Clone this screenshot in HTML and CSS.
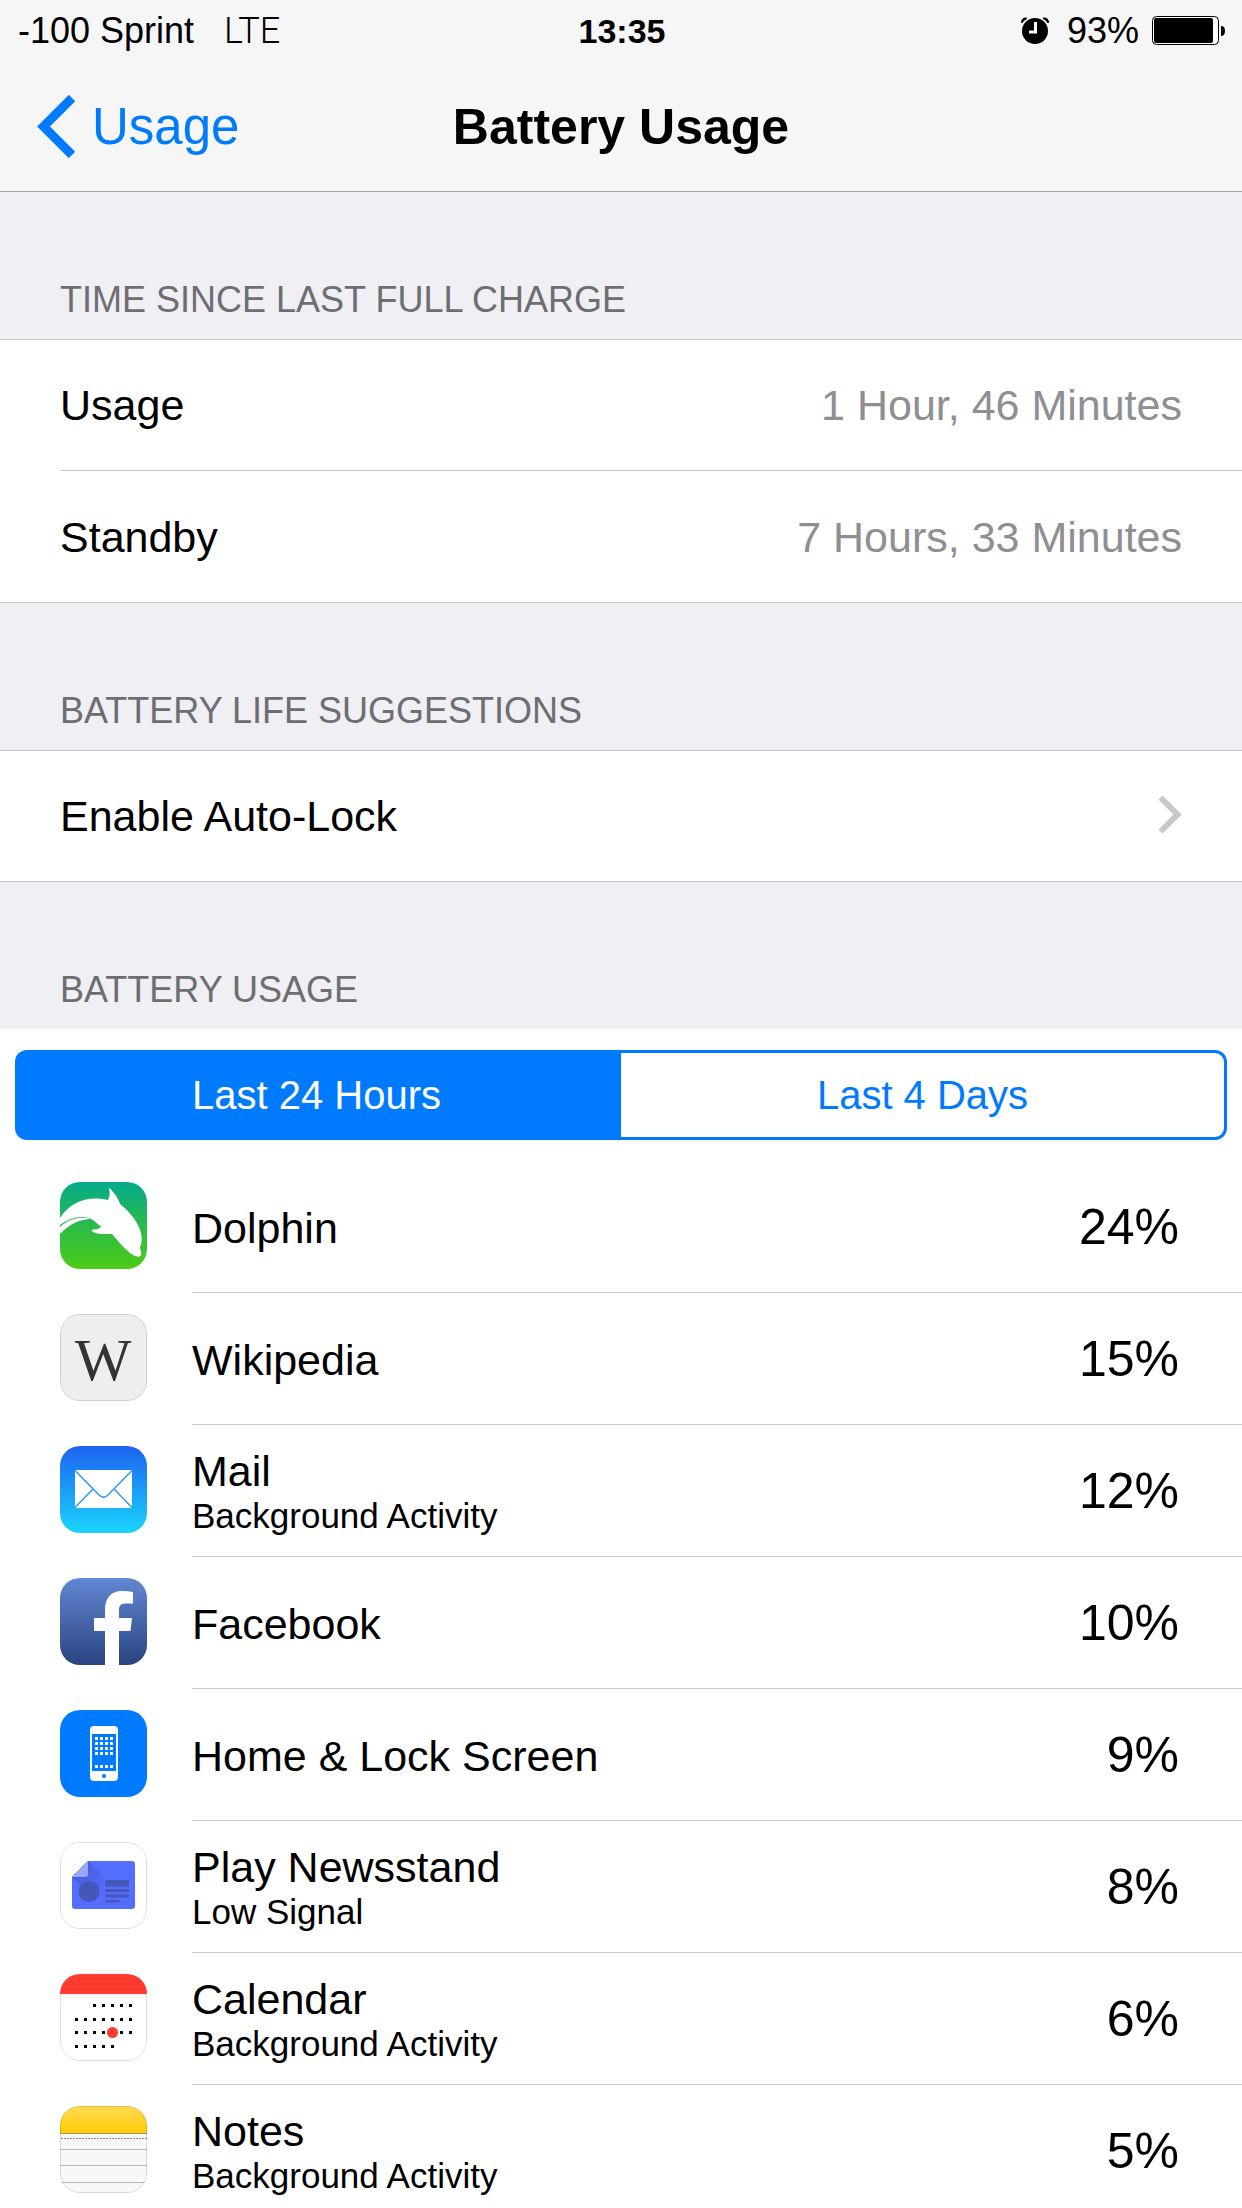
FILE: index.html
```html
<!DOCTYPE html>
<html lang="en">
<head>
    <meta charset="UTF-8">
    <meta name="viewport" content="width=device-width, initial-scale=1.0">
    <title>Battery Usage</title>
    <link rel="stylesheet" href="styles.css">
</head>
<body>

<header class="header">
    <div class="status-bar">
        <div class="status-left">
            <span>-100 Sprint</span>
            <span class="network">LTE</span>
        </div>
        <div class="clock">13:35</div>
        <div class="status-right">
            <svg class="alarm" width="28" height="28" viewBox="0 0 28 28" aria-hidden="true">
                <circle cx="14" cy="14" r="13"/>
                <path d="M0 6Q0 0 6 0.500L6 2Q3 3 1.500 6ZM28 6Q28 0 22 0.500L22 2Q25 3 26.500 6Z"/>
                <path d="M14.500 5V15H8" fill="none" stroke="#fff" stroke-width="3"/>
            </svg>
            <span class="percent">93%</span>
            <svg class="battery" width="74" height="30" viewBox="0 0 74 30" aria-hidden="true">
                <rect x="0.500" y="0.500" width="66" height="28" rx="4" fill="#fff" stroke="#000"/>
                <rect x="2" y="2" width="59" height="25" rx="2"/>
                <path d="M69 10Q73 10 73 15Q73 20 69 20Z"/>
            </svg>
        </div>
    </div>
    <nav class="nav-bar">
        <a class="back" href="#">
            <svg width="39" height="63" viewBox="0 0 39 63" aria-hidden="true">
                <path d="M35 3L6.500 31.500L35 60" fill="none" stroke="#007aff" stroke-width="9"/>
            </svg>
            Usage
        </a>
        <h1>Battery Usage</h1>
    </nav>
</header>

<main class="content">
    <h2>TIME SINCE LAST FULL CHARGE</h2>
    <div class="group">
        <div class="row"><span>Usage</span><span class="value">1 Hour, 46 Minutes</span></div>
        <div class="row"><span>Standby</span><span class="value">7 Hours, 33 Minutes</span></div>
    </div>

    <h2>BATTERY LIFE SUGGESTIONS</h2>
    <div class="group">
        <a class="row" href="#">
            <span>Enable Auto-Lock</span>
            <svg width="24" height="42" viewBox="0 0 24 42" aria-hidden="true">
                <path d="M2.500 2.500L19.500 19.500L2.500 36.500" fill="none" stroke="#c7c7cc" stroke-width="6"/>
            </svg>
        </a>
    </div>

    <h2>BATTERY USAGE</h2>
    <section class="usage">
        <div class="segments">
            <button class="segment active" type="button">Last 24 Hours</button>
            <button class="segment" type="button">Last 4 Days</button>
        </div>

        <ul class="apps">
            <li class="app">
                <svg class="icon" viewBox="0 0 87 87" aria-hidden="true">
                    <defs>
                        <linearGradient id="dolphin" x2="0" y2="1">
                            <stop offset="0" stop-color="#05aa8c"/>
                            <stop offset="0.500" stop-color="#2abb4a"/>
                            <stop offset="1" stop-color="#4dcc17"/>
                        </linearGradient>
                    </defs>
                    <rect width="87" height="87" fill="url(#dolphin)"/>
                    <path fill="#fff" d="M0 36C8 23 22 16 37 16.500C41 16.500 45 17.500 48 18C50 14 50 10 49 6Q50 6 53 10C57 14 59 19 60 22C71 31 80 42 81.500 54C82 58 81.500 62 80 65C80 68 82 71 81 73C80 75.500 77 75 73 73C65 68 58 59 52 52C46 52 36 53 32 49Q31 48 33 47.500C37 48 40 46 41 44.500C37 42 34 38 29 36C19 33 8 37 0 43Z"/>
                    <path fill="#fff" d="M0 45C8 37 20 33.500 31 37C21 37 9 42 0 52Z"/>
                </svg>
                <div class="label"><div class="name">Dolphin</div></div>
                <div class="share">24%</div>
            </li>
            <li class="app">
                <svg class="icon" viewBox="0 0 87 87" aria-hidden="true">
                    <rect width="87" height="87" fill="#eee"/>
                    <text class="wiki" x="43" y="66" text-anchor="middle">W</text>
                    <rect class="edge" x="0.500" y="0.500" width="86" height="86" rx="19"/>
                </svg>
                <div class="label"><div class="name">Wikipedia</div></div>
                <div class="share">15%</div>
            </li>
            <li class="app">
                <svg class="icon" viewBox="0 0 87 87" aria-hidden="true">
                    <defs>
                        <linearGradient id="mail" x2="0" y2="1">
                            <stop offset="0" stop-color="#1d62f0"/>
                            <stop offset="1" stop-color="#1ad5fd"/>
                        </linearGradient>
                    </defs>
                    <rect width="87" height="87" fill="url(#mail)"/>
                    <rect x="15" y="24" width="57" height="38" fill="#fff"/>
                    <path d="M15 24.500L39 49Q43.500 53.500 48 49L72 24.500M15 61.500L33 43M72 61.500L54 43" fill="none" stroke="#2196f6" stroke-width="1.300"/>
                </svg>
                <div class="label">
                    <div class="name">Mail</div>
                    <div class="detail">Background Activity</div>
                </div>
                <div class="share">12%</div>
            </li>
            <li class="app">
                <svg class="icon" viewBox="0 0 87 87" aria-hidden="true">
                    <defs>
                        <linearGradient id="facebook" x2="0" y2="1">
                            <stop offset="0" stop-color="#6287d3"/>
                            <stop offset="1" stop-color="#2a4480"/>
                        </linearGradient>
                    </defs>
                    <rect width="87" height="87" fill="url(#facebook)"/>
                    <path fill="#fff" d="M45 87V53H34V40H45V32C45 20 51 13 62 13Q68 13 73 14V25.500H66C61 25.500 59 27.500 59 32V40H72L70.500 53H59V87Z"/>
                </svg>
                <div class="label"><div class="name">Facebook</div></div>
                <div class="share">10%</div>
            </li>
            <li class="app">
                <svg class="icon" viewBox="0 0 87 87" aria-hidden="true">
                    <rect width="87" height="87" fill="#007aff"/>
                    <rect x="30" y="16" width="28" height="55" rx="4" fill="#fff"/>
                    <rect x="32" y="24" width="24" height="37" fill="#007aff"/>
                    <path d="M35 28.500H53M35 33.500H53M35 38.500H53M35 43.500H53M35 56.500H53" stroke="#fff" stroke-width="3" stroke-dasharray="3 2"/>
                    <circle cx="44" cy="66" r="2" fill="#007aff"/>
                </svg>
                <div class="label"><div class="name">Home &amp; Lock Screen</div></div>
                <div class="share">9%</div>
            </li>
            <li class="app">
                <svg class="icon" viewBox="0 0 87 87" aria-hidden="true">
                    <defs>
                        <linearGradient id="fold" x2="1" y2="1">
                            <stop offset="0" stop-color="#4456cf"/>
                            <stop offset="1" stop-color="#536dfe"/>
                        </linearGradient>
                    </defs>
                    <rect width="87" height="87" fill="#fff"/>
                    <path d="M28 19H72Q75 19 75 22V64Q75 67 72 67H15Q12 67 12 64V35Z" fill="#536dfe"/>
                    <path d="M28 19L44 35V51H28L12 35Z" fill="url(#fold)"/>
                    <path d="M28 19V32Q28 35 25 35H12Z" fill="#97a6ff"/>
                    <g fill="#4557b8">
                        <circle cx="29" cy="49.500" r="10.500"/>
                        <rect x="45" y="38" width="24" height="6.500"/>
                        <rect x="45" y="47" width="24" height="3"/>
                        <rect x="45" y="52.500" width="24" height="3"/>
                        <rect x="45" y="58" width="14.500" height="2.500"/>
                    </g>
                    <rect class="edge" x="0.500" y="0.500" width="86" height="86" rx="19"/>
                </svg>
                <div class="label">
                    <div class="name">Play Newsstand</div>
                    <div class="detail">Low Signal</div>
                </div>
                <div class="share">8%</div>
            </li>
            <li class="app">
                <svg class="icon" viewBox="0 0 87 87" aria-hidden="true">
                    <rect width="87" height="87" fill="#fff"/>
                    <rect class="edge" x="0.500" y="0.500" width="86" height="86" rx="19"/>
                    <rect width="87" height="20" fill="#ff3b30"/>
                    <path d="M33 31.500H72M15 45.500H72M15 58.500H72M15 72.500H54" stroke="#000" stroke-width="3" stroke-dasharray="3 6"/>
                    <circle cx="52.500" cy="58.500" r="5.500" fill="#ff3b30"/>
                </svg>
                <div class="label">
                    <div class="name">Calendar</div>
                    <div class="detail">Background Activity</div>
                </div>
                <div class="share">6%</div>
            </li>
            <li class="app">
                <svg class="icon" viewBox="0 0 87 87" aria-hidden="true">
                    <defs>
                        <linearGradient id="notes" x2="0" y2="1">
                            <stop offset="0" stop-color="#ffdb54"/>
                            <stop offset="1" stop-color="#ffcc05"/>
                        </linearGradient>
                    </defs>
                    <rect width="87" height="87" fill="#f8f8f8"/>
                    <rect width="87" height="27" fill="url(#notes)"/>
                    <path d="M0 27.500H87" stroke="#a9964f"/>
                    <path d="M1 32.500H87" stroke="#888" stroke-dasharray="2 1"/>
                    <path d="M0 43.500H87M0 59.500H87M0 76.500H87" stroke="#b9b9b9"/>
                    <rect class="edge" x="0.500" y="0.500" width="86" height="86" rx="19"/>
                </svg>
                <div class="label">
                    <div class="name">Notes</div>
                    <div class="detail">Background Activity</div>
                </div>
                <div class="share">5%</div>
            </li>
        </ul>
    </section>
</main>

</body>
</html>
```
FILE: styles.css
```css
* {
    box-sizing: border-box;
}
body {
    font-family: "Liberation Sans", Arial, sans-serif;
    font-size: 43px;
    line-height: 48px;
    background-color: #efeff4;
    color: #000;
    margin: 0;
    height: 100vh;
    display: flex;
    flex-direction: column;
}
a {
    color: inherit;
    text-decoration: none;
}

/* status bar + navigation */
.header {
    background: #f6f6f6;
    border-bottom: 1px solid #a7a7aa;
}
.status-bar {
    display: grid;
    grid-template-columns: 1fr auto 1fr;
    align-items: center;
    height: 62px;
    padding: 0 16px 0 18px;
    font-size: 36px;
}
.status-left {
    display: flex;
    gap: 30px;
}
.network {
    font-family: Roboto, sans-serif;
    font-weight: 300;
}
.clock {
    font-size: 34px;
    font-weight: bold;
}
.status-right {
    display: flex;
    align-items: center;
    justify-content: flex-end;
}
.percent {
    margin: 0 13px 0 18px;
}
.nav-bar {
    display: grid;
    grid-template-columns: 1fr auto 1fr;
    align-items: center;
    height: 129px;
    padding: 0 37px;
}
.back {
    display: flex;
    align-items: center;
    gap: 16px;
    font-size: 51px;
    color: #007aff;
}
h1 {
    font-size: 50px;
    margin: 0;
}

/* settings list */
.content {
    flex: 1;
    min-height: 0;
    overflow-y: auto;
    scrollbar-width: none;
}
h2 {
    margin: 0;
    padding: 88px 60px 19px;
    font-size: 36px;
    font-weight: normal;
    line-height: 40px;
    color: #6d6d72;
}
.group {
    background: #fff;
    border-top: 1px solid #c8c7cc;
    border-bottom: 1px solid #c8c7cc;
}
.row {
    display: flex;
    align-items: center;
    justify-content: space-between;
    height: 130px;
    margin-left: 60px;
    padding-right: 60px;
}
.row + .row {
    height: 132px;
    border-top: 1px solid #c8c7cc;
}
.value {
    color: #8e8e93;
}

/* battery usage by app */
.usage {
    background: #fff;
}
.segments {
    display: grid;
    grid-template-columns: 1fr 1fr;
    padding: 21px 15px;
}
.segment {
    height: 90px;
    padding: 0;
    border: 3px solid #007aff;
    border-left: 0;
    border-radius: 0 12px 12px 0;
    background: #fff;
    color: #007aff;
    font-family: inherit;
    font-size: 40px;
}
.segment.active {
    border-radius: 12px 0 0 12px;
    background: #007aff;
    color: #fff;
}
.apps {
    list-style: none;
    margin: 0;
    padding: 0;
}
.app {
    display: grid;
    grid-template-columns: 87px 1fr auto;
    column-gap: 45px;
    height: 132px;
    padding-left: 60px;
}
.icon {
    width: 87px;
    height: 87px;
    margin-top: 21px;
    border-radius: 20px;
}
.wiki {
    font-family: "Liberation Serif", serif;
    font-size: 60px;
    fill: #333;
}
.edge {
    fill: none;
    stroke: #000;
    stroke-opacity: 0.13;
}
.label,
.share {
    display: flex;
    flex-direction: column;
    justify-content: center;
    height: 132px;
    border-bottom: 1px solid #c8c7cc;
}
.label {
    margin-right: -45px;
    padding-top: 3px;
}
.detail {
    font-size: 35px;
    line-height: 42px;
}
.share {
    padding-right: 63px;
    font-size: 50px;
}
```
